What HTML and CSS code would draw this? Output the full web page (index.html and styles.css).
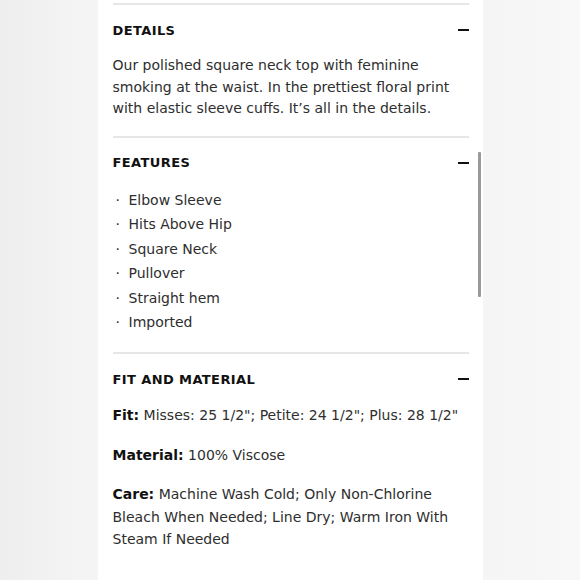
FILE: index.html
```html
<!DOCTYPE html>
<html>
<head>
<meta charset="utf-8">
<link rel="stylesheet" href="styles.css">
</head>
<body>
<div class="page">
  <div class="panel">
    <section class="acc">
      <div class="acc-head"><h2>DETAILS</h2><span class="minus"></span></div>
      <p class="desc">Our polished square neck top with feminine smoking at the waist. In the prettiest floral print with elastic sleeve cuffs. It’s all in the details.</p>
    </section>
    <section class="acc">
      <div class="acc-head"><h2>FEATURES</h2><span class="minus"></span></div>
      <ul class="feats">
        <li>Elbow Sleeve</li>
        <li>Hits Above Hip</li>
        <li>Square Neck</li>
        <li>Pullover</li>
        <li>Straight hem</li>
        <li>Imported</li>
      </ul>
      <div class="scrollbar"></div>
    </section>
    <section class="acc last">
      <div class="acc-head"><h2>FIT AND MATERIAL</h2><span class="minus"></span></div>
      <p class="spec"><b>Fit:</b> Misses: 25 1/2"; Petite: 24 1/2"; Plus: 28 1/2"</p>
      <p class="spec"><b>Material:</b> 100% Viscose</p>
      <p class="spec care"><b>Care:</b> Machine Wash Cold; Only Non-Chlorine Bleach When Needed; Line Dry; Warm Iron With Steam If Needed</p>
    </section>
  </div>
</div>
</body>
</html>
```
FILE: styles.css
```css
html, body {
  margin: 0;
  padding: 0;
}
body {
  width: 580px;
  height: 580px;
  overflow: hidden;
  background: linear-gradient(90deg, #eeeeee 0, #f5f5f5 98px, #f5f5f5 482px, #f8f8f8 100%);
  font-family: "DejaVu Sans", sans-serif;
  color: #2e2e2e;
}
.page {
  display: flex;
  justify-content: center;
}
.panel {
  width: 385px;
  background: #fff;
  padding: 3px 14px 0 15px;
  height: 580px;
  box-sizing: border-box;
}
.acc {
  border-top: 2px solid #e6e6e6;
  position: relative;
}
.acc-head {
  display: flex;
  justify-content: space-between;
  align-items: center;
  height: 50px;
}
.acc-head h2 {
  margin: 0;
  font-size: 13px;
  font-weight: 700;
  letter-spacing: 0.4px;
  color: #111;
}
.minus {
  width: 11px;
  height: 2px;
  background: #111;
}
.desc {
  margin: 0 0 16px;
  font-size: 14px;
  line-height: 21.5px;
}
.feats {
  list-style: none;
  margin: 0;
  padding: 0 0 17px;
}
.feats li {
  font-size: 14px;
  line-height: 24.6px;
  padding-left: 16px;
  position: relative;
}
.feats li::before {
  content: "·";
  position: absolute;
  left: 3px;
  top: 0;
  font-weight: 400;
}
.scrollbar {
  position: absolute;
  right: -12px;
  top: 14px;
  width: 3px;
  height: 145px;
  background: #9a9a9a;
  border-radius: 1px;
}
.spec {
  margin: 0 0 17px;
  font-size: 14px;
  line-height: 22.5px;
}
.spec b {
  color: #111;
}
```
